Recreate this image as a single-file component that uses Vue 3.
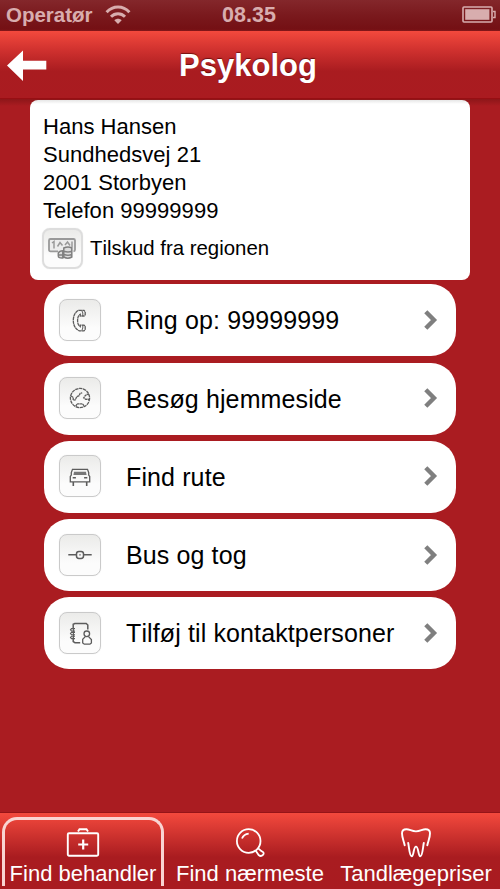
<script setup>
const address = ['Hans Hansen', 'Sundhedsvej 21', '2001 Storbyen', 'Telefon 99999999']
const actions = [
  { icon: 'phone', label: 'Ring op: 99999999' },
  { icon: 'globe', label: 'Besøg hjemmeside' },
  { icon: 'car', label: 'Find rute' },
  { icon: 'transit', label: 'Bus og tog' },
  { icon: 'contact', label: 'Tilføj til kontaktpersoner' },
]
</script>

<template>
  <div class="screen">
    <div class="status">
      <div class="carrier">
        <span>Operatør</span>
        <svg width="26" height="20" viewBox="0 0 26 20" fill="none" stroke="currentColor" stroke-width="3">
          <path d="M1.6 7.2C8 .4 18 .4 24.4 7.2" />
          <path d="M6 11.8C10 7.8 16 7.8 20 11.8" />
          <path d="M9.3 15.3C11.5 13.3 14.5 13.3 16.7 15.3L13 19Z" fill="currentColor" stroke="none" />
        </svg>
      </div>
      <div class="clock">08.35</div>
      <svg class="battery" width="34" height="18" viewBox="0 0 34 18">
        <rect x="1" y="1" width="29" height="15" rx="1" fill="none" stroke="currentColor" stroke-width="1.6" />
        <rect x="3.2" y="3.2" width="24.2" height="10.6" fill="currentColor" />
        <path d="M31 5.5h2v6h-2" fill="none" stroke="currentColor" stroke-width="1.4" />
      </svg>
    </div>

    <header class="navbar">
      <svg class="back" width="40" height="32" viewBox="0 0 40 32">
        <path d="M0 15.6L16 .5V10.8H39.3V19.4H16V31Z" fill="#fff" />
      </svg>
      <h1>Psykolog</h1>
    </header>

    <main>
      <section class="card">
        <p v-for="line in address" :key="line">{{ line }}</p>
        <div class="subsidy">
          <span class="tile small">
            <svg width="40" height="40" viewBox="0 0 40 40" fill="none" stroke="#888" stroke-width="1.5">
              <path d="M16 23.3H8.5Q7 23.3 7 21.8V12.5Q7 11 8.5 11H31.5Q33 11 33 12.5V21.8Q33 23.3 31.5 23.3" fill="#ececec" stroke="#999" stroke-width="1.8" />
              <path d="M10 15l2-1.5v7M15.5 18.5l2.5-4 2.5 3M23 17l2.5-3 2.5 3.5M30 13.5v6" stroke="#999" />
              <path d="M16.3 25q1-2.2 4.5-2.2V30q-4.5.3-4.5-2zM21.8 20q4.2-2.2 8 0v9q-4 2.6-8 0zM22 23.3q4 1.5 8 0M22 26.5q4 1.5 8 0M17 27h4" fill="#ddd" stroke="#808080" />
            </svg>
          </span>
          <span>Tilskud fra regionen</span>
        </div>
      </section>

      <ul class="actions">
        <li v-for="a in actions" :key="a.icon">
          <span class="tile">
            <svg width="42" height="42" viewBox="0 0 42 42" fill="none" stroke="#5c5c5c" stroke-width="1.3">
              <g v-if="a.icon === 'phone'">
                <path d="M19.5 11.3H25L26.2 12.8V15.8L25 17H21.3V15.4C19.2 16.4 18.6 18.6 18.6 21.4S19.2 26.4 21.3 27.6V26.2H25L26.2 27.4V30.4L25 31.9H20.3C16.6 30.2 14.3 26.4 14.3 21.5S16.2 13 19.5 11.3Z" stroke-dasharray="3.4 .4" />
                <path d="M22.8 11.5L23.8 14v3M22.8 31.6L23.8 29v-3" stroke-width="1" />
              </g>
              <g v-else-if="a.icon === 'globe'">
                <circle cx="21" cy="21" r="9.6" stroke-dasharray="3.4 .6" />
                <path d="M12 19l2.2 1.3v2.8l2-.2 1.6-3.2 2.2-1 1.2-2.3 2-.5M30 17.5l-2-.2-2 1.6-1.3 2 2 1.4 2.5-.1 1 1M16.7 29.2l1.7-2.4h5.2l1.7 2.4" stroke-dasharray="2.4 .4" />
              </g>
              <g v-else-if="a.icon === 'car'">
                <path d="M12.3 20V17.5L13.5 14.3H28.5L29.7 17.5V20L30.7 21.5V26.9H11.3V21.5Z" />
                <path d="M15.6 17.3H26.4L26.8 19.3H15.2Z" fill="#777" stroke="#777" />
                <path d="M13.7 22.7h3.2M25.1 22.7h3.2M14.3 27v4M27.7 27v4" stroke-width="1.6" />
              </g>
              <g v-else-if="a.icon === 'transit'">
                <path d="M9.3 20.8h8M24.7 20.8h8" stroke-width="1.5" />
                <rect x="17.5" y="17.4" width="7" height="7" rx="2.4" stroke-width="1.5" />
                <path d="M20.3 20.8h1.4" />
              </g>
              <g v-else>
                <path d="M14.2 16V12.3L15.8 11.5H27.2L28.8 13V17.6M14.2 25.5V29.5L16 30.7H21.2" stroke-width="1.5" />
                <path d="M16 16.6h-3.5l-1 1.2 1 1.2H16M16 20.4h-3.5l-1 1.2 1 1.2H16M16 24.2h-3.5l-1 1.2 1 1.2H16M14.4 16v11" stroke-width="1.1" />
                <circle cx="27.8" cy="21.8" r="2.8" />
                <path d="M26.3 24.6L23.7 27.3V31L25.3 32.2H30.9L32.4 31V27.5L29.5 24.6" />
              </g>
            </svg>
          </span>
          <span class="label">{{ a.label }}</span>
          <svg class="chevron" width="14" height="20" viewBox="0 0 14 20" fill="none" stroke="#7f7f7f" stroke-width="4.4">
            <path d="M1.8 1.7L10 10L1.8 18.3" />
          </svg>
        </li>
      </ul>
    </main>

    <nav class="tabs">
      <a class="tab first active">
        <svg width="34" height="32" viewBox="0 0 34 32" fill="none" stroke="#fff" stroke-width="1.9">
          <rect x="1.8" y="6.3" width="30.4" height="22.4" rx="1.2" />
          <path d="M12 4.6L13.5 2.3H20.5L22 4.6" />
          <path d="M17.2 12.5v10M12.2 17.5h10" stroke-width="2.2" />
        </svg>
        <span>Find behandler</span>
      </a>
      <a class="tab second">
        <svg width="34" height="32" viewBox="0 0 34 32" fill="none" stroke="#fff" stroke-width="1.8">
          <circle cx="15.7" cy="14" r="11.8" />
          <path d="M9 11.5C10.2 8.5 12.3 7 15.7 6.6" />
          <path d="M22.6 23.4L25.6 28Q28 30 30 27.8T28.4 24.2L25.2 21.3" stroke-linejoin="round" />
        </svg>
        <span>Find nærmeste</span>
      </a>
      <a class="tab third">
        <svg width="34" height="32" viewBox="0 0 34 32" fill="none" stroke="#fff" stroke-width="1.9" stroke-linecap="round" stroke-linejoin="round">
          <path d="M5.7 18.3C4.6 13.5 3 10.5 3 6.3Q3.1 2.1 7.5 2.2C10.8 2.3 12.8 4.4 17 4.4S23.2 2.3 26.5 2.2Q31 2.1 31 6.3C31 10.5 29.4 13.5 28.3 18.3" />
          <path d="M9.2 16C10.2 21 10.5 29.2 12.7 29.2S14.4 19.6 17 19.6 19.1 29.2 21.3 29.2 23.8 21 24.8 16" />
        </svg>
        <span>Tandlægepriser</span>
      </a>
    </nav>
  </div>
</template>

<style>
body { background: #aa1c21; }
</style>

<style scoped>
.screen {
  width: 500px;
  height: 889px;
  display: flex;
  flex-direction: column;
  overflow: hidden;
  background: #aa1c21;
  font-family: "Liberation Sans", Arial, sans-serif;
  color: #000;
}
.status {
  height: 31px;
  box-sizing: border-box;
  display: grid;
  grid-template-columns: 1fr auto 1fr;
  align-items: center;
  padding: 0 4px 2px 6px;
  background: linear-gradient(#84272b, #7a191d 50%, #741014 94%, #85171a);
  color: #d8adae;
  font-weight: bold;
  font-size: 20.5px;
}
.clock { font-size: 21.5px; padding: 2px 4px 0 0; }
.carrier { display: flex; align-items: center; gap: 12px; }
.battery { justify-self: end; }
.navbar {
  height: 68px;
  flex: none;
  display: grid;
  grid-template-columns: 40px 1fr 40px;
  align-items: center;
  padding: 0 11px 0 7px;
  border-bottom: 1px solid #970f13;
  box-sizing: border-box;
  background: linear-gradient(#f3493d, #ce302e 30%, #a91c20 60%, #aa1b20);
}
h1 {
  margin: 0;
  padding-top: 2px;
  text-align: center;
  color: #fff;
  font-size: 31px;
  line-height: 36px;
  text-shadow: 0 -1.5px 1px rgba(70, 0, 0, .65);
}
.back { margin-top: 2px; }
main {
  flex: 1;
  padding: .6px 30px 0;
  background: linear-gradient(#8d1619, #aa1c21 7px);
}
.card {
  height: 180px;
  margin-right: .5px;
  box-sizing: border-box;
  padding: 13.4px 12px 0 13px;
  border-radius: 8px;
  background: linear-gradient(#e6e6e6, #fff 4px);
}
.card p { margin: 0; font-size: 22px; line-height: 28.1px; letter-spacing: .03px; white-space: nowrap; }
.subsidy { display: flex; align-items: center; gap: 7.5px; margin: 2.6px 0 0 -1.5px; font-size: 20.4px; font-kerning: none; }
.tile {
  width: 42px;
  height: 42px;
  flex: none;
  box-sizing: border-box;
  display: flex;
  align-items: center;
  justify-content: center;
  border: 1.5px solid #cacaca;
  border-radius: 8px;
  background: linear-gradient(#ebebe9, #fcfcfc 70%);
  box-shadow: 0 0 1px #ddd;
}
.tile svg { flex: none; }
.small { width: 41px; height: 41px; border: 2px solid #ddd; }
.actions { list-style: none; margin: 4.9px 14px 0; padding: 0; display: flex; flex-direction: column; gap: 6.2px; }
.actions li {
  height: 72px;
  box-sizing: border-box;
  display: flex;
  align-items: center;
  padding: 0 18px 1px 15px;
  border-radius: 25px;
  background: #fff;
}
.label { flex: 1; margin-left: 25px; font-size: 25px; letter-spacing: .12px; font-kerning: none; padding-top: 2px; white-space: nowrap; }
.tabs {
  height: 77px;
  flex: none;
  box-sizing: border-box;
  display: flex;
  align-items: stretch;
  padding: 4px 4px 3px 2px;
  border-top: 1px solid #951418;
  background: linear-gradient(#f3493d, #a91c20 58%, #a91b20);
}
.tab {
  display: flex;
  flex-direction: column;
  align-items: center;
  color: #fff;
  font-size: 22px;
  line-height: 26px;
  white-space: nowrap;
  padding-top: 10px;
  box-sizing: border-box;
}
.tab svg { flex: none; }
.tab span { margin-top: 2px; }
.first { width: 162px; }
.second { width: 172px; }
.third { width: 160px; }
.active { border: 3px solid #f9d4d2; border-bottom: 0; border-radius: 15px 15px 0 0; padding-top: 7px; }
</style>
